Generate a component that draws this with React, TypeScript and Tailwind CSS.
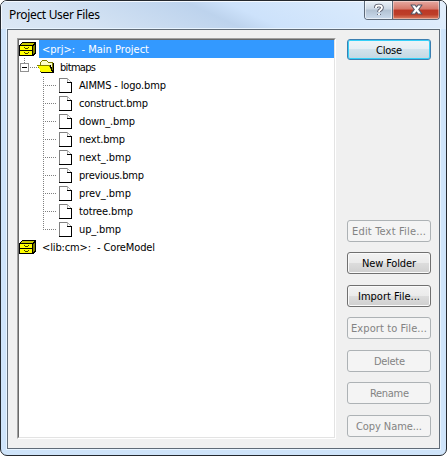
import React from "react";

const tahoma = "font-['DejaVu_Sans_Condensed','DejaVu_Sans',sans-serif] [font-stretch:condensed]";

function Cabinet() {
  return (
    <svg width="18" height="14" viewBox="0 0 18 14" shapeRendering="crispEdges" className="shrink-0">
      <path d="M0 3L3 0H17V11L14 14H0Z" fill="#000" />
      <path d="M3 1H15L13 3H1Z" fill="#c8c800" />
      <path d="M14 4L16 2V10L14 12Z" fill="#808000" />
      <path d="M1 4H13V8H1ZM1 9H13V13H1Z" fill="#ff0" />
      <path d="M5 5H6V6H5ZM6 6H9V7H6ZM9 5H10V6H9ZM5 10H6V11H5ZM6 11H9V12H6ZM9 10H10V11H9Z" fill="#404000" />
    </svg>
  );
}

function Folder() {
  return (
    <svg width="18" height="14" viewBox="0 0 18 14" shapeRendering="crispEdges" className="shrink-0">
      <path d="M3 12V2L5 0H9L11 2H16V12Z" fill="#808000" />
      <path d="M4 11V2L5 1H9L11 3H15V11Z" fill="#ffffc8" />
      <path d="M16 3H17V13H4V12H16Z" fill="#000" />
      <path d="M0 5H13L16 12H4Z" fill="#808000" />
      <path d="M1 6H12L15 12H4Z" fill="#ff0" />
      <path d="M13 5H14V7H15V10H16V13H15V11H14V8H13Z" fill="#000" />
    </svg>
  );
}

function Page() {
  return (
    <svg width="13" height="15" viewBox="0 0 13 15" shapeRendering="crispEdges" className="shrink-0">
      <path d="M0 0H8V1H1V14H0Z" fill="#808080" />
      <path d="M8 0H9V1H10V2H11V3H12V4H13V5H8Z" fill="#b0b0b0" />
      <path d="M9 2H10V3H11V4H9Z" fill="#fff" />
      <path d="M8 4H13V15H0V14H12V5H8Z" fill="#000" />
    </svg>
  );
}

function Guide({ last }: { last: boolean }) {
  return (
    <svg width="40" height="18" viewBox="0 0 40 18" shapeRendering="crispEdges" className="shrink-0">
      <path d={last ? "M24.5 1V10" : "M24.5 1V18"} stroke="#808080" strokeDasharray="1 1" />
      <path d="M26 9.5H38" stroke="#808080" strokeDasharray="1 1" />
    </svg>
  );
}

const files: [string, string][] = [
  ["AIMMS - logo.bmp", "w-[87px]"],
  ["construct.bmp", "w-[69px]"],
  ["down_.bmp", "w-[56px]"],
  ["next.bmp", "w-[46px]"],
  ["next_.bmp", "w-[52px]"],
  ["previous.bmp", "w-[65px]"],
  ["prev_.bmp", "w-[52px]"],
  ["totree.bmp", "w-[54px]"],
  ["up_.bmp", "w-[42px]"],
];

function Label({ text, width }: { text: string; width: string }) {
  return (
    <svg className={`${width} h-[18px] shrink-0 overflow-visible whitespace-pre`} aria-label={text}>
      <text x="0" y="13" fill="currentColor" textLength="100%" lengthAdjust="spacing" className="whitespace-pre">{text}</text>
    </svg>
  );
}

function Button({ text, width, disabled, gap }: { text: string; width: string; disabled?: boolean; gap: string }) {
  const look = disabled
    ? "border-[#adb2b5] bg-[#f4f4f4] text-[#838383]"
    : "border-[#707070] bg-[linear-gradient(#f2f2f2_0%,#ebebeb_48%,#dddddd_50%,#cfcfcf_100%)] text-black shadow-[inset_0_0_0_1px_#fafafa]";
  return (
    <button disabled={disabled} className={`${gap} flex h-[22px] w-[84px] shrink-0 items-center justify-center rounded-[3px] border ${look}`}>
      <Label text={text} width={width} />
    </button>
  );
}

export default function App() {
  return (
    <div className="h-[456px] w-[447px] bg-white">
      <div className={`flex h-full w-full flex-col overflow-hidden rounded-[7px] border border-[#24282e] bg-[#cfe4fa] text-[11px] ${tahoma}`}>
        <header className="flex h-7 shrink-0 items-start justify-between bg-[linear-gradient(25deg,#dce8f5_0%,#d3e2f3_20%,#bdd3ed_48%,#cde2fb_56%,#d6e8fc_75%,#e4effc_100%)] pl-[8px] shadow-[inset_1px_1px_0_#f4f9ff]">
          <h1 className="mt-[5px] h-[18px] font-['Noto_Sans',sans-serif] text-[12px] leading-[18px] text-black">
            <Label text="Project User Files" width="w-[91px]" />
          </h1>
          <div className="mr-[6px] flex h-[19px] overflow-hidden rounded-b-[4px] border border-t-0 border-[#5c6979]">
            <button className="flex w-[28px] items-center justify-center border-r border-[#5c6979] bg-[linear-gradient(#eaf1f8_0%,#cbd7e4_45%,#b1c1d2_50%,#cbdbed_100%)] shadow-[inset_0_0_0_1px_#ffffff90]">
              <svg width="12" height="14" viewBox="0 0 12 14">
                <path d="M3 5V4Q3 2.5 6 2.5T9 4.8Q9 6 7.5 6.8Q6 7.5 6 9M6 11V12" fill="none" stroke="#535666" strokeWidth="3.6" />
                <path d="M3 5V4Q3 2.5 6 2.5T9 4.8Q9 6 7.5 6.8Q6 7.5 6 9M6 10.5V12" fill="none" stroke="#fff" strokeWidth="1.9" />
              </svg>
            </button>
            <button className="flex w-[46px] items-center justify-center bg-[linear-gradient(#e6aaa2_0%,#d57769_45%,#bb3826_50%,#bd3e29_75%,#dc8064_100%)] shadow-[inset_0_0_0_1px_#ffffff60]">
              <svg width="13" height="12" viewBox="0 0 13 12">
                <path d="M1 1H5L6.5 3L8 1H12L8.7 5.5L12 10H8L6.5 8L5 10H1L4.3 5.5Z" fill="#fff" stroke="#535666" strokeWidth="1.1" strokeLinejoin="round" />
              </svg>
            </button>
          </div>
        </header>
        <div className="mx-[6px] mb-[6px] flex min-h-0 flex-1 border border-[#606b77] bg-[#f0f0f0] pl-[9px] pt-2 shadow-[0_0_0_1px_#e8f4ff]">
          <main className="h-[401px] w-[319px] shrink-0 border-b border-r border-white border-l-[#a0a0a0] border-t-[#a0a0a0] border-l border-t bg-white">
            <div className="h-full border border-b-[#e3e3e3] border-l-[#696969] border-r-[#e3e3e3] border-t-[#696969]">
              <div className="flex h-[18px] items-center">
                <Cabinet />
                <div className="ml-[2px] flex h-[18px] flex-1 bg-[#3399ff] pl-[3px] text-white">
                  <Label text="<prj>:  - Main Project" width="w-[107px]" />
                </div>
              </div>
              <div className="flex h-[18px] items-center">
                <svg width="18" height="18" viewBox="0 0 18 18" shapeRendering="crispEdges" className="shrink-0">
                  <path d="M5.5 0V5M11 9.5H18" stroke="#808080" strokeDasharray="1 1" />
                  <rect x="1.5" y="5.5" width="8" height="8" fill="#fff" stroke="#919191" />
                  <path d="M3 9.5H8" stroke="#000" />
                </svg>
                <Folder />
                <div className="ml-[5px]"><Label text="bitmaps" width="w-[36px]" /></div>
              </div>
              {files.map(([name, width], i) => (
                <div key={name} className="flex h-[18px] items-center">
                  <Guide last={i === files.length - 1} />
                  <Page />
                  <div className="ml-[7px]"><Label text={name} width={width} /></div>
                </div>
              ))}
              <div className="flex h-[18px] items-center">
                <Cabinet />
                <div className="ml-[5px]"><Label text="<lib:cm>:  - CoreModel" width="w-[113px]" /></div>
              </div>
            </div>
          </main>
          <nav className="ml-[11px] flex flex-col">
            <button className="mt-px flex h-[21px] w-[84px] items-center justify-center rounded-[3px] border border-[#3c7fb1] bg-[linear-gradient(#eef4f7_0%,#e4eef3_48%,#d2e3ec_50%,#c3d8e3_100%)] shadow-[inset_0_0_0_1px_#35d0f8]">
              <Label text="Close" width="w-[26px]" />
            </button>
            <Button text="Edit Text File..." width="w-[74px]" disabled gap="mt-[160px]" />
            <Button text="New Folder" width="w-[54px]" gap="mt-[10px]" />
            <Button text="Import File..." width="w-[62px]" gap="mt-[11px]" />
            <Button text="Export to File..." width="w-[76px]" disabled gap="mt-[10px]" />
            <Button text="Delete" width="w-[31px]" disabled gap="mt-[11px]" />
            <Button text="Rename" width="w-[39px]" disabled gap="mt-[10px]" />
            <Button text="Copy Name..." width="w-[66px]" disabled gap="mt-[11px]" />
          </nav>
        </div>
      </div>
    </div>
  );
}
